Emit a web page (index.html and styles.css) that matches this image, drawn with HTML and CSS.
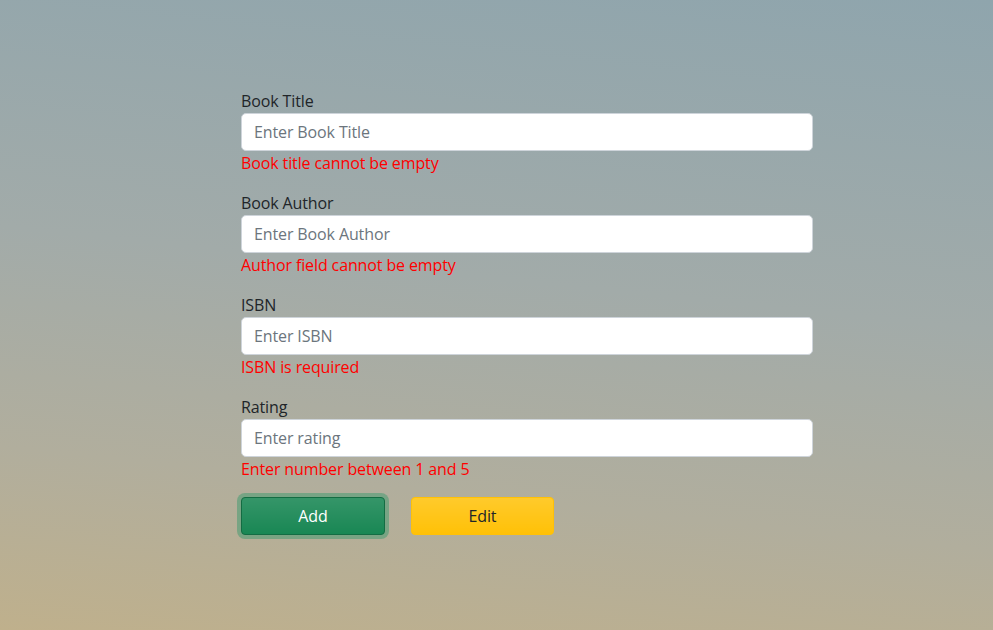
FILE: index.html
```html
<!DOCTYPE html>
<html lang="en">
<head>
<meta charset="utf-8">
<title>Books</title>
<link rel="stylesheet" href="styles.css">
</head>
<body>
<div class="page">
  <form class="book-form">
    <div class="field">
      <label class="field-label">Book Title</label>
      <input class="field-input" type="text" placeholder="Enter Book Title">
      <div class="field-error">Book title cannot be empty</div>
    </div>
    <div class="field">
      <label class="field-label">Book Author</label>
      <input class="field-input" type="text" placeholder="Enter Book Author">
      <div class="field-error">Author field cannot be empty</div>
    </div>
    <div class="field">
      <label class="field-label">ISBN</label>
      <input class="field-input" type="text" placeholder="Enter ISBN">
      <div class="field-error">ISBN is required</div>
    </div>
    <div class="field">
      <label class="field-label">Rating</label>
      <input class="field-input" type="text" placeholder="Enter rating">
      <div class="field-error">Enter number between 1 and 5</div>
    </div>
    <div class="actions">
      <button type="button" class="btn btn-add">Add</button>
      <button type="button" class="btn btn-edit">Edit</button>
    </div>
  </form>
</div>
</body>
</html>
```
FILE: styles.css
```css
html, body {
  margin: 0;
  padding: 0;
}
body {
  height: 630px;
  font-family: "Open Sans", "Noto Sans", "Liberation Sans", sans-serif;
  font-size: 16px;
  letter-spacing: -0.12px;
  color: #212529;
  background: linear-gradient(186deg, #8fa5ad 0%, #a2aba9 45%, #b1ae9d 75%, #bfb08c 100%);
  overflow: hidden;
}
.page {
  padding: 89px 0 0 241px;
}
.book-form {
  width: 572px;
}
.field {
  margin-bottom: 16px;
}
.field-label {
  display: block;
  line-height: 24px;
  height: 24px;
}
.field-input {
  display: block;
  box-sizing: border-box;
  width: 100%;
  height: 38px;
  margin: 0;
  padding: 6px 12px;
  font-family: inherit;
  font-size: 16px;
  letter-spacing: inherit;
  color: #212529;
  background: #fff;
  border: 1px solid #ced4da;
  border-radius: 5px;
  outline: none;
}
.field-input::placeholder {
  color: #6c757d;
  opacity: 1;
}
.field-error {
  line-height: 24px;
  height: 24px;
  color: #ff0000;
}
.actions {
  display: flex;
  gap: 26px;
}
.btn {
  box-sizing: border-box;
  height: 38px;
  padding: 0;
  font-family: inherit;
  font-size: 16px;
  letter-spacing: inherit;
  border-radius: 4px;
  border: 1px solid transparent;
  cursor: pointer;
}
.btn-add {
  width: 144px;
  color: #fff;
  background: #198754 linear-gradient(180deg, rgba(255, 255, 255, 0.12), rgba(255, 255, 255, 0));
  border-color: #146c43;
  box-shadow: 0 0 0 4px rgba(60, 153, 110, 0.5);
}
.btn-edit {
  width: 143px;
  color: #212529;
  background: #ffc107 linear-gradient(180deg, rgba(255, 255, 255, 0.15), rgba(255, 255, 255, 0));
  border-color: #ffc107;
}
```
